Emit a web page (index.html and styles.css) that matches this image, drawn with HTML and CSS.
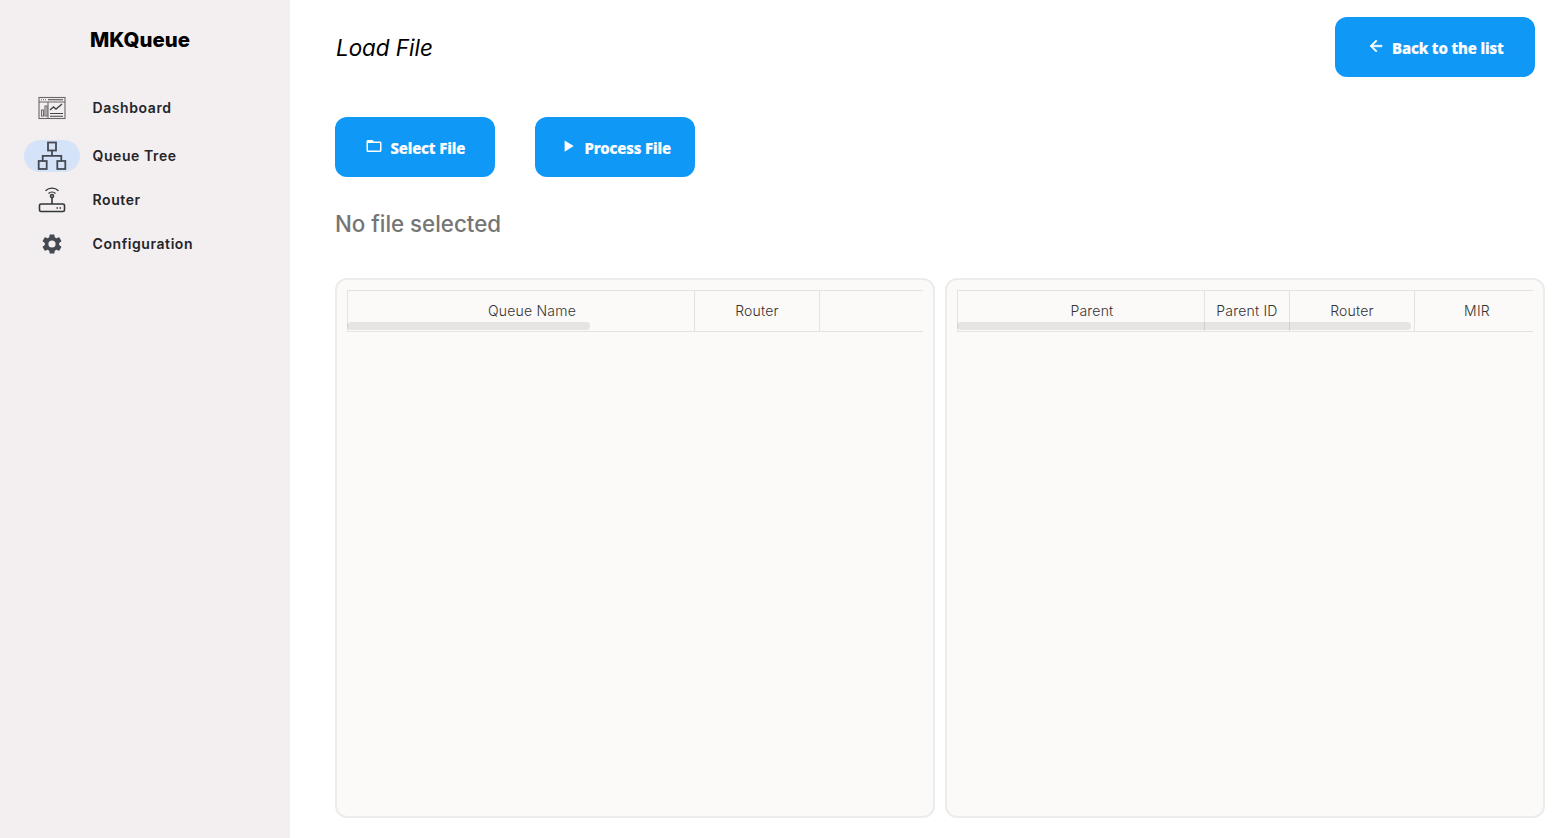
FILE: index.html
```html
<!DOCTYPE html>
<html lang="en">
<head>
<meta charset="utf-8">
<title>MKQueue</title>
<link rel="stylesheet" href="styles.css">
</head>
<body>
<div class="app">
  <aside class="sidebar">
    <h1 class="brand">MKQueue</h1>
    <nav class="nav">
      <a class="nav-item">
        <span class="nav-icon">
          <svg width="28" height="24" viewBox="0 0 28 24" fill="none" stroke="#6a6665" stroke-width="1.100">
            <rect x="1" y="1.500" width="26" height="21"/>
            <path d="M1 6h26M10 6v16.500"/>
            <path d="M3 3.700h.8M5 3.700h.8M7 3.700h.8M10 3.700h15" stroke="#444"/>
            <path d="M3.500 20v-6h2v6zM7 20V10h2v10z"/>
            <path d="M12 14l3.500-3 2.500 2 6-5" stroke="#444" stroke-width="1.400"/>
            <path d="M12 17.500h13M12 20.300h13" stroke="#444"/>
          </svg>
        </span>
        <span class="nav-label">Dashboard</span>
      </a>
      <a class="nav-item nav-item-active">
        <span class="nav-icon nav-icon-active">
          <svg width="30" height="30" viewBox="0 0 30 30" fill="none" stroke="#454a52" stroke-width="1.800">
            <rect x="11" y="1.500" width="8" height="8"/>
            <rect x="1.700" y="20" width="8" height="8"/>
            <rect x="20.300" y="20" width="8" height="8"/>
            <path d="M15 9.500v5.300M5.700 20v-5.200h18.600V20"/>
          </svg>
        </span>
        <span class="nav-label">Queue Tree</span>
      </a>
      <a class="nav-item">
        <span class="nav-icon">
          <svg width="28" height="26" viewBox="0 0 28 26" fill="none" stroke="#33363b" stroke-width="1.600">
            <rect x="1.500" y="17" width="25" height="7.500" rx="1.500"/>
            <path d="M14 10.500V17"/>
            <circle cx="14" cy="9" r="1.500"/>
            <path d="M10.500 6.500a5 5 0 0 1 7 0M7.500 3.700a9.500 9.500 0 0 1 13 0" stroke-width="1.300"/>
            <path d="M18.500 21h1.500M21.500 21H23" stroke-width="1.600"/>
          </svg>
        </span>
        <span class="nav-label">Router</span>
      </a>
      <a class="nav-item">
        <span class="nav-icon">
          <svg width="24" height="24" viewBox="0 0 24 24" fill="#454a52">
            <path d="M19.140 12.940c.04-.3.060-.61.060-.94 0-.32-.02-.64-.07-.94l2.030-1.580a.49.49 0 0 0 .12-.61l-1.920-3.320a.49.49 0 0 0-.59-.22l-2.390.96c-.5-.38-1.030-.7-1.620-.94l-.36-2.540a.48.48 0 0 0-.48-.41h-3.840a.48.48 0 0 0-.47.41l-.36 2.540c-.59.24-1.130.57-1.620.94l-2.390-.96a.48.48 0 0 0-.59.22L2.740 8.870a.48.48 0 0 0 .12.61l2.030 1.580c-.05.3-.09.63-.09.94s.02.640.07.94l-2.030 1.580a.49.49 0 0 0-.12.61l1.920 3.320c.12.22.37.29.59.22l2.390-.96c.5.38 1.030.7 1.620.94l.36 2.540c.05.24.24.41.48.41h3.840c.24 0 .44-.17.47-.41l.36-2.540c.59-.24 1.130-.56 1.620-.94l2.390.96c.22.08.47 0 .59-.22l1.920-3.320a.48.48 0 0 0-.12-.61l-2.010-1.580zM12 15.600a3.600 3.600 0 1 1 0-7.200 3.600 3.600 0 0 1 0 7.200z"/>
          </svg>
        </span>
        <span class="nav-label">Configuration</span>
      </a>
    </nav>
  </aside>
  <main class="main">
    <header class="page-head">
      <h2 class="page-title">Load File</h2>
      <button class="btn btn-back" type="button">
        <svg width="18" height="18" viewBox="0 0 24 24" fill="#fff" stroke="#fff" stroke-width="0.800"><path d="M20 11H7.830l5.590-5.590L12 4l-8 8 8 8 1.410-1.410L7.830 13H20z"/></svg>
        <span>Back to the list</span>
      </button>
    </header>
    <div class="actions">
      <button class="btn" type="button">
        <svg width="18" height="18" viewBox="0 0 24 24" fill="#fff"><path d="M20 6h-8l-2-2H4c-1.100 0-2 .9-2 2v12c0 1.100.9 2 2 2h16c1.100 0 2-.9 2-2V8c0-1.100-.9-2-2-2zm0 12H4V8h16v10z"/></svg>
        <span>Select File</span>
      </button>
      <button class="btn" type="button">
        <svg width="18" height="18" viewBox="0 0 24 24" fill="#fff"><path d="M7.500 4.500v15L19.500 12z"/></svg>
        <span>Process File</span>
      </button>
    </div>
    <p class="status">No file selected</p>
    <div class="panels">
      <section class="panel">
        <div class="grid-head">
          <div class="cell cell-queue">Queue Name</div>
          <div class="cell cell-router">Router</div>
          <div class="cell cell-fill"></div>
          <div class="scroll-thumb scroll-thumb-left"></div>
        </div>
      </section>
      <section class="panel">
        <div class="grid-head">
          <div class="cell cell-parent">Parent</div>
          <div class="cell cell-parent-id">Parent ID</div>
          <div class="cell cell-router">Router</div>
          <div class="cell cell-fill">MIR</div>
          <div class="scroll-thumb scroll-thumb-right"></div>
        </div>
      </section>
    </div>
  </main>
</div>
</body>
</html>
```

FILE: styles.css
```css
* { box-sizing: border-box; }
html, body { margin: 0; height: 100%; background: #fff; overflow: hidden; }
body { font-family: Inter, "Liberation Sans", sans-serif; }
.app { display: flex; height: 838px; }
.sidebar { width: 290px; flex: none; background: #f3eeef; }
.brand { margin: 0; padding-top: 28px; width: 280px; text-align: center; font-size: 20.400px; line-height: 24px; font-weight: 800; color: #000; }
.nav { display: flex; flex-direction: column; gap: 12px; margin-top: 40px; padding-left: 24px; }
.nav-item { display: flex; align-items: center; gap: 12.500px; height: 32px; }
.nav-item-active { margin-top: 4px; }
.nav-icon { width: 56px; height: 32px; border-radius: 16px; display: flex; align-items: center; justify-content: center; flex: none; }
.nav-icon-active { background: #d5e3f8; }
.nav-label { font-size: 14px; font-weight: 600; letter-spacing: 0.580px; color: #23252b; padding-bottom: 2px; }
.main { flex: 1; padding: 17px 14px 20px 45px; display: flex; flex-direction: column; min-width: 0; }
.page-head { display: flex; justify-content: space-between; align-items: center; height: 60px; padding-right: 10px; }
.page-title { margin: 0; padding: 0 0 0 1px; font-size: 22.400px; font-weight: 400; font-style: italic; color: #000; }
.btn { width: 160px; height: 60px; border: 0; border-radius: 12px; background: #1098f7; color: #fff; display: flex; align-items: center; justify-content: center; gap: 7.500px; font-family: "Noto Sans", sans-serif; font-size: 15px; font-weight: 800; letter-spacing: -0.150px; -webkit-text-stroke: 0.200px #fff; padding: 2px 0 0; }
.btn svg { flex: none; position: relative; top: -2px; }
.btn-back { width: 200px; }
.actions { display: flex; gap: 40px; margin-top: 40px; }
.status { margin: 31px 0 0; font-size: 22.300px; line-height: 32px; font-weight: 500; color: #757575; }
.panels { display: flex; gap: 10px; margin-top: 38px; flex: 1; min-height: 0; }
.panel { width: 600px; border: 2px solid #ececea; border-radius: 12px; background: #fbfaf8; padding: 10px; }
.grid-head { position: relative; display: flex; height: 42px; border: solid #e3e3e1; border-width: 1px 0; font-size: 14px; font-weight: 300; letter-spacing: 0.200px; color: #333; overflow: hidden; }
.cell { display: flex; align-items: center; justify-content: center; border-left: 1px solid #e3e3e1; flex: none; padding-bottom: 1px; }
.cell-queue { width: 347px; padding-left: 22px; }
.cell-parent { width: 247px; padding-left: 22px; }
.cell-parent-id { width: 85px; }
.cell-router { width: 125px; }
.cell-fill { width: 125px; }
.scroll-thumb { position: absolute; left: 0; bottom: 1px; height: 8px; border-radius: 4px; background: rgba(0, 0, 0, 0.085); }
.scroll-thumb-left { width: 243px; }
.scroll-thumb-right { width: 454px; }
```
